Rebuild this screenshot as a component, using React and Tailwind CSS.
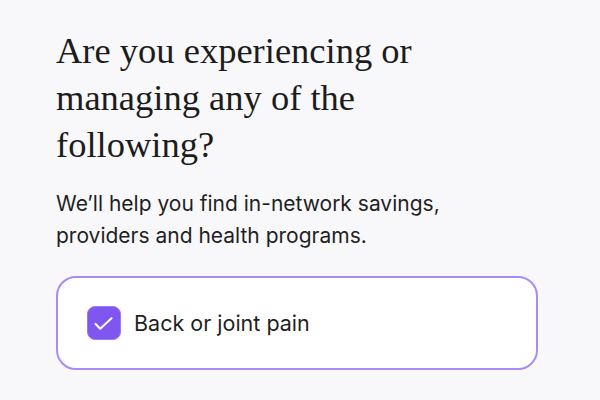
import React, { useState } from 'react';

const App = () => {
  const [checked, setChecked] = useState(true);

  return (
    <div className="w-[600px] h-[400px] overflow-hidden bg-[#f8f8fa] pl-[56px] pr-[63px] pt-[27px]">
      <h1 className="text-[36.5px] leading-[47px] text-[#1c1c1c] font-['Liberation_Serif',serif] w-[370px]">
        Are you experiencing or managing any of the following?
      </h1>
      <p className="mt-[20px] text-[21px] leading-[32px] text-[#1f1f1f] font-['Inter',sans-serif] w-[400px]">
        We’ll help you find in-network savings, providers and health programs.
      </p>
      <button
        onClick={() => setChecked(!checked)}
        className="mt-[24px] w-[482px] h-[94px] flex items-center gap-[13px] pl-[29px] bg-white border-2 border-[#a98bf7] rounded-[20px] text-left"
      >
        <span className={`w-[34px] h-[34px] rounded-[8px] flex items-center justify-center ${checked ? 'bg-[#7f56ef] border border-[#9a7bf4]' : 'bg-white border-2 border-gray-300'}`}>
          {checked && (
            <svg width="34" height="34" viewBox="0 0 34 34" fill="none" stroke="white" strokeWidth="2.2" strokeLinecap="round" strokeLinejoin="round">
              <path d="M8 18l5 5L25 12" />
            </svg>
          )}
        </span>
        <span className="text-[21.5px] text-[#1f1f1f] font-['Inter',sans-serif]">Back or joint pain</span>
      </button>
    </div>
  );
};

export default App;
